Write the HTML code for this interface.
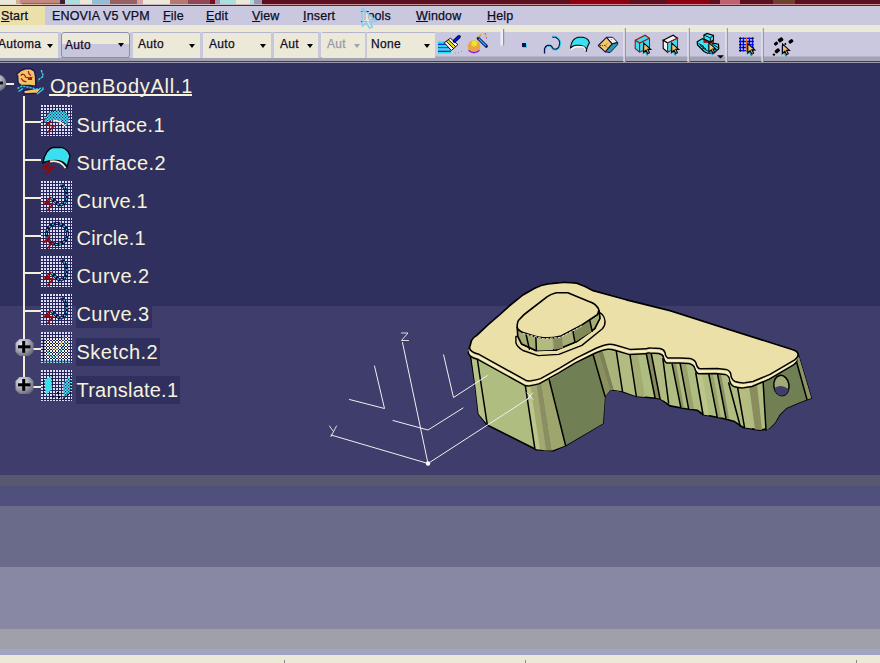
<!DOCTYPE html>
<html><head><meta charset="utf-8">
<style>
*{margin:0;padding:0;box-sizing:border-box}
html,body{width:880px;height:663px;overflow:hidden;background:#30305e}
body{position:relative;font-family:"Liberation Sans",sans-serif}
.a{position:absolute}
.band{position:absolute;left:0;width:880px}
.menu{position:absolute;top:9px;font-size:12.5px;letter-spacing:0.15px;color:#0c0c28;white-space:nowrap;-webkit-text-stroke:0.25px #0c0c28}
.u{text-decoration:underline}
.combo{position:absolute;top:32px;height:25.5px;background:#ece9d8;border-top:1px solid #b4b4cc}
.combo .t{position:absolute;left:5px;top:4px;font-size:12px;letter-spacing:0.3px;color:#0c0c28;white-space:nowrap;-webkit-text-stroke:0.25px currentColor}
.arr{position:absolute;top:11px;width:0;height:0;border-left:3.5px solid transparent;border-right:3.5px solid transparent;border-top:4px solid #000}
.sep{position:absolute;top:32px;height:25.5px;width:3px;background:#c8c8dc}
.lbl{position:absolute;left:76px;height:28px;background:#30305e;color:#f6f2dc;font-size:20px;white-space:nowrap;padding-left:0.5px;padding-right:2px;line-height:28px}
</style></head>
<body>
<!-- top strip -->
<div class="band" style="top:0;height:6px;background:#5a1020"></div>
<div class="a" style="left:0px;top:0;width:16px;height:4px;background:#ece8d8"></div><div class="a" style="left:16px;top:0;width:4px;height:4px;background:#d0b090"></div><div class="a" style="left:20px;top:0;width:40px;height:4px;background:#c08880"></div><div class="a" style="left:60px;top:0;width:5px;height:4px;background:#402030"></div><div class="a" style="left:65px;top:0;width:15px;height:4px;background:#a8e0e0"></div><div class="a" style="left:80px;top:0;width:12px;height:4px;background:#ece8d8"></div><div class="a" style="left:92px;top:0;width:18px;height:4px;background:#90c0d8"></div><div class="a" style="left:110px;top:0;width:27px;height:4px;background:#986060"></div><div class="a" style="left:137px;top:0;width:6px;height:4px;background:#d8a0a0"></div><div class="a" style="left:143px;top:0;width:27px;height:4px;background:#ece8d8"></div><div class="a" style="left:170px;top:0;width:18px;height:4px;background:#b87870"></div><div class="a" style="left:188px;top:0;width:22px;height:4px;background:#904858"></div><div class="a" style="left:210px;top:0;width:5px;height:4px;background:#701020"></div><div class="a" style="left:215px;top:0;width:5px;height:4px;background:#a098b0"></div><div class="a" style="left:220px;top:0;width:16px;height:4px;background:#a8e0e0"></div><div class="a" style="left:236px;top:0;width:14px;height:4px;background:#ece8d8"></div><div class="a" style="left:250px;top:0;width:4px;height:4px;background:#a8e0e0"></div><div class="a" style="left:254px;top:0;width:8px;height:4px;background:#9898b0"></div><div class="a" style="left:570px;top:0;width:60px;height:4px;background:#900010"></div><div class="a" style="left:667px;top:0;width:43px;height:4px;background:#900010"></div><div class="a" style="left:720px;top:0;width:20px;height:4px;background:#c06070"></div><div class="a" style="left:773px;top:0;width:22px;height:4px;background:#704030"></div><div class="a" style="left:22px;top:2.5px;width:38px;height:1.5px;background:#a05858"></div>
<div class="a" style="left:0;top:4px;width:22px;height:1px;background:#ddd8d0"></div>
<div class="a" style="left:22px;top:4px;width:38px;height:1px;background:#d8b8a0"></div>
<div class="a" style="left:60px;top:4px;width:203px;height:1px;background:#c8b8c0"></div>
<div class="a" style="left:263px;top:4px;width:617px;height:1px;background:#c89090"></div>
<div class="band" style="top:5px;height:1px;background:#40303c"></div>
<!-- menu bar -->
<div class="band" style="top:6px;height:19px;background:#c9c8df"></div>
<div class="a" style="left:0;top:6px;width:45px;height:19px;background:#ebe0a9"></div>
<div class="menu" style="left:1px"><span class="u">S</span>tart</div>
<div class="menu" style="left:52px">ENOVIA V5 VPM</div>
<div class="menu" style="left:163px"><span class="u">F</span>ile</div>
<div class="menu" style="left:206px"><span class="u">E</span>dit</div>
<div class="menu" style="left:252px"><span class="u">V</span>iew</div>
<div class="menu" style="left:303px"><span class="u">I</span>nsert</div>
<div class="menu" style="left:361px"><span class="u">T</span>ools</div>
<div class="menu" style="left:416px"><span class="u">W</span>indow</div>
<div class="menu" style="left:487px"><span class="u">H</span>elp</div>
<!-- toolbar -->
<div class="band" style="top:25px;height:32px;background:#ece9d8"></div>
<div class="a" style="left:435px;top:32px;width:445px;height:24px;background:#c9c8df"></div>
<div class="a" style="left:435px;top:56px;width:445px;height:1.5px;background:#b4b4cc"></div>
<div class="band" style="top:57px;height:4px;background:#a3a3b5"></div>
<div class="band" style="top:61px;height:1px;background:#454535"></div>
<div class="band" style="top:62px;height:1px;background:#9898a8"></div>

<div class="combo" style="left:0;width:58px"><div class="t" style="left:-2px">Automa</div><div class="arr" style="left:47px"></div></div>
<div class="sep" style="left:58px"></div>
<div class="combo" style="left:61px;width:69px;border:1px solid #8c8cac;border-radius:3px;background:linear-gradient(#ece9d8 0,#ece9d8 11px,#c8c6dc 11px)"><div class="t" style="left:3px;top:5px">Auto</div><div class="arr" style="left:56px;top:10px"></div></div>
<div class="sep" style="left:130px"></div>
<div class="combo" style="left:133px;width:67px"><div class="t">Auto</div><div class="arr" style="left:56px"></div></div>
<div class="sep" style="left:200px"></div>
<div class="combo" style="left:203px;width:68px"><div class="t" style="left:6px">Auto</div><div class="arr" style="left:57px"></div></div>
<div class="sep" style="left:271px"></div>
<div class="combo" style="left:274px;width:44px"><div class="t" style="left:6px">Aut</div><div class="arr" style="left:33px"></div></div>
<div class="sep" style="left:318px"></div>
<div class="combo" style="left:322px;width:43px"><div class="t" style="left:5px;color:#9a98a8">Aut</div><div class="arr" style="left:32px;border-top-color:#a0a0b0"></div></div>
<div class="sep" style="left:365px;width:2px"></div>
<div class="combo" style="left:367px;width:68px"><div class="t" style="left:4px">None</div><div class="arr" style="left:57px"></div></div>


<!-- toolbar icons svg -->
<svg class="a" style="left:0;top:0" width="880" height="64">
<defs>
<g id="cur" transform="scale(0.85)"><path d="M0,0 L0,12 L2.8,9.5 L4.8,13.5 L6.8,12.5 L4.8,8.5 L8.3,8.5 Z" fill="#18a0a8" transform="translate(-1.2,1.5)"/><path d="M0,0 L0,11 L2.8,8.5 L4.8,12.5 L6.8,11.5 L4.8,7.5 L8.3,7.5 Z" fill="#f8c868" stroke="#000018" stroke-width="1.3" stroke-linejoin="miter"/></g>
</defs>
<!-- brush -->
<g>
<rect x="438" y="41.5" width="13" height="2.2" fill="#20e0f0"/><rect x="438" y="43.7" width="13" height="1.2" fill="#0020e0"/>
<rect x="438" y="45" width="13" height="2.2" fill="#20e0f0"/><rect x="438" y="47.2" width="13" height="1.2" fill="#0020e0"/>
<rect x="438" y="48.5" width="13" height="2.2" fill="#20e0f0"/><rect x="438" y="50.7" width="13" height="1.2" fill="#0020e0"/>
<rect x="438" y="52" width="13" height="1.5" fill="#20e0f0"/>
<path d="M444.2,42.7 L446.3,41.2 L453.6,48.6 L451.4,50.5 Z" fill="#f8f8f0"/>
<path d="M446.3,41.2 L448.3,39.7 L455.7,46.6 L453.6,48.6 Z" fill="#f0e020"/>
<path d="M448.3,39.7 L450.4,38.2 L457.9,44.7 L455.7,46.6 Z" fill="#f8f8f0"/>
<path d="M444.2,42.7 L450.4,38.2 L457.9,44.7 L451.4,50.5 Z M446.3,41.2 L453.6,48.6 M448.3,39.7 L455.7,46.6" fill="none" stroke="#000" stroke-width="0.9"/>
<path d="M454.5,41 L459,36.8" stroke="#000" stroke-width="3.6" stroke-linecap="round"/>
<path d="M454.5,41 L459,36.8" stroke="#0018f0" stroke-width="2.2" stroke-linecap="round"/>
<g fill="#8888a0"><circle cx="455.5" cy="53" r="0.5"/><circle cx="458.5" cy="52.5" r="0.5"/><circle cx="461.5" cy="51" r="0.5"/></g>
</g>
<!-- ball + wand -->
<g>
<circle cx="474" cy="46.5" r="6.3" fill="#e8a448"/>
<path d="M467.8,47.5 A6.3,6.3 0 0 0 480.2,47.5 L479.5,50 A6.3,6.3 0 0 1 468.5,50 Z" fill="#e89a50"/>
<path d="M468.3,49.5 A6.3,6.3 0 0 0 479.7,49.5 L478.8,51 A6.3,6.3 0 0 1 469.2,51 Z" fill="#a030e0"/>
<path d="M468.5,50.3 Q474,55 479.5,50.3" stroke="#9020e0" stroke-width="1.3" fill="none"/>
<circle cx="474.3" cy="43.6" r="3" fill="#f0e41c"/>
<path d="M478.3,38.3 L486.3,46.2" stroke="#101060" stroke-width="3.2" stroke-linecap="round"/>
<path d="M478.8,38.8 L486,45.8" stroke="#30b8f0" stroke-width="1.2"/>
<g fill="#e8c020"><circle cx="478.5" cy="36.5" r="0.9"/><circle cx="481" cy="34.5" r="0.9"/><circle cx="484" cy="33.8" r="0.9"/><circle cx="486" cy="36" r="0.9"/><circle cx="483.5" cy="37.5" r="0.8"/></g>
<g fill="#b040d0"><circle cx="480" cy="36" r="0.7"/><circle cx="485.5" cy="34" r="0.7"/><circle cx="486.5" cy="38" r="0.7"/></g>
</g>
<!-- separator handle -->
<rect x="500.5" y="29" width="2.5" height="16.5" fill="#eeeef4"/>
<rect x="503" y="29" width="1.2" height="16.5" fill="#9090a0"/>
<!-- dot -->
<rect x="523" y="44" width="4" height="4" fill="#30d8f0"/>
<rect x="522" y="43" width="4" height="4" fill="#101050"/>
<!-- curve -->
<path d="M544.6,53.5 L544.6,49 Q545.5,46 547.4,45.6 L550.1,45.6 Q551.5,45.8 553.2,49 L556.3,49.3 Q558.3,48.5 559,46.8 L560,43.1 Q559.8,41 558.4,39.1 L555.6,37 L552.3,37" fill="none" stroke="#101050" stroke-width="1.5" stroke-linejoin="round"/>
<path d="M545.5,53.5 L545.5,49.5 Q546.3,46.8 547.8,46.5 L549.8,46.5 Q551,46.8 552.8,50 L556.5,50.2 Q558.9,49.4 559.8,47.2 L560.9,43.1 Q560.6,40.6 559,38.6 L556,36.2 L552.3,36.2" fill="none" stroke="#30dcf0" stroke-width="1" stroke-linejoin="round"/>
<!-- surface -->
<path d="M570.4,48 Q571,43 573.1,40.4 Q575,38 578,37.3 L583,37.3 Q587,38 588.5,40.4 L589.4,42.8 L587.2,47.1 L586.3,51.4 L585.4,47.7 Q583,45.6 579.9,45.3 L575.6,45.3 Q572.5,46 570.4,48 Z" fill="#3ae0f2" stroke="#000" stroke-width="1.1" stroke-linejoin="round"/>
<path d="M571,49.6 Q573.5,47 576.8,46.6 L583,46.9 Q585,48 585.7,50.5" fill="none" stroke="#fffff0" stroke-width="1.2"/>
<!-- block -->
<g stroke-linejoin="round">
<path d="M606.5,37.3 L612.8,37.3 L617.6,42.4 L612.1,43.7 Z" fill="#f6f4ea" stroke="#101050" stroke-width="1"/>
<path d="M612.1,43.9 L617.6,42.6 L617.6,44.6 L610,52.6 L605.2,51.8 Z" fill="#20a0a8" stroke="#101050" stroke-width="1"/>
<path d="M598.3,45.5 L606.5,37.3 L612.1,43.9 L605.2,51.8 Z" fill="#f4c664" stroke="#101050" stroke-width="1.1"/>
<path d="M600,45.5 L605,45.5 L607.5,43.5 M605,45.5 L607.5,47.5" fill="none" stroke="#302010" stroke-width="0.8" stroke-dasharray="1,1"/>
<circle cx="611.6" cy="39.6" r="0.5" fill="#606070"/>
</g>
<!-- separators -->
<rect x="623.5" y="28" width="1.3" height="34" fill="#f0f0f6"/><rect x="624.8" y="28" width="1" height="34" fill="#8c8c9c"/>
<rect x="687.5" y="28" width="1.3" height="34" fill="#f0f0f6"/><rect x="688.8" y="28" width="1" height="34" fill="#8c8c9c"/>
<rect x="725.5" y="28" width="1.3" height="34" fill="#f0f0f6"/><rect x="726.8" y="28" width="1" height="34" fill="#8c8c9c"/>
<rect x="761.5" y="28" width="1.3" height="34" fill="#f0f0f6"/><rect x="762.8" y="28" width="1" height="34" fill="#8c8c9c"/>
<!-- cube cursor 1 -->
<g>
<path d="M635.2,40.3 L645.1,35.2 L649.5,38.2 L649.5,47.1 L639.6,52.2 L635.2,48.5 Z" fill="#3ae0f2" stroke="#a01010" stroke-width="1.1"/>
<path d="M635.2,40.3 L639.6,43 L649.5,38.2 M639.6,43 L639.6,52.2" fill="none" stroke="#a01010" stroke-width="1.1"/>
<use href="#cur" x="643.7" y="43"/>
</g>
<!-- cube cursor 2 -->
<g>
<path d="M663.2,40.3 L673.1,35.2 L677.5,38.2 L667.6,43 Z" fill="#f4f4f8" stroke="#000" stroke-width="1.1"/>
<path d="M663.2,40.3 L667.6,43 L667.6,52.2 L663.2,48.5 Z" fill="#f4f4f8" stroke="#000" stroke-width="1.1"/>
<path d="M667.6,43 L677.5,38.2 L677.5,47.1 L667.6,52.2 Z" fill="#3ae0f2" stroke="#a01010" stroke-width="1.1"/>
<use href="#cur" x="671.7" y="43"/>
</g>
<!-- multi boxes -->
<g>
<path d="M697.2,41.8 L702.3,38.6 L709,42.2 L713,43.2 L718.5,44.2 L718.8,48.8 L714,52.8 L708,53.5 L704,51.5 L697.5,45 Z" fill="#3ae6f6" stroke="#000" stroke-width="1.2"/>
<path d="M698.5,43.5 L704,46.5 M700,45.5 L706,48.8 M702,47.8 L708,51 M712,44 L718,47.5 M713,47 L716,49.5" stroke="#000" stroke-width="0.9" fill="none"/>
<rect x="703.5" y="39" width="10.5" height="3.8" fill="#a00808"/>
<path d="M703.9,35 L707.1,33.4 L713.5,35.4 L713.5,40 L710.3,41.9 L704,39 Z" fill="#3ae6f6" stroke="#000" stroke-width="1.1"/>
<path d="M703.9,35 L710.3,37.9 L713.5,35.4 M710.3,37.9 L710.3,41.9" stroke="#000" stroke-width="0.9" fill="none"/>
<use href="#cur" x="708.9" y="42.7"/>
<path d="M717,55.2 L724,55.2 L720.5,58.5 Z" fill="#000"/>
</g>
<!-- grid -->
<g>
<g stroke="#0010f0" stroke-width="1.3">
<path d="M739,38.4 L754,38.4 M739,41.5 L754,41.5 M739,44.6 L754,44.6 M739,47.5 L754,47.5 M739,50.6 L754,50.6"/>
<path d="M740.3,37.5 L740.3,51.5 M743.4,37.5 L743.4,51.5 M749.4,37.5 L749.4,51.5 M752.5,37.5 L752.5,51.5"/>
</g>
<path d="M746.5,37.3 L746.5,51.8" stroke="#f06018" stroke-width="1.2"/>
<g fill="#000"><circle cx="743.4" cy="41.5" r="0.9"/><circle cx="749.4" cy="41.5" r="0.9"/><circle cx="743.4" cy="47.5" r="0.9"/><circle cx="740.3" cy="38.4" r="0.8"/><circle cx="752.5" cy="38.4" r="0.8"/><circle cx="740.3" cy="44.6" r="0.8"/><circle cx="740.3" cy="50.6" r="0.8"/></g>
<use href="#cur" x="747.8" y="43.5"/>
</g>
<!-- scatter -->
<g fill="#000">
<rect x="-2.6" y="-2" width="5.2" height="4" rx="1.2" transform="translate(780.6,39.9) rotate(-35)"/>
<rect x="-2" y="-1.5" width="4" height="3" rx="1" transform="translate(776,43.6) rotate(-35)"/>
<rect x="-2.4" y="-1.7" width="4.8" height="3.4" rx="1.1" transform="translate(790.9,41.4) rotate(-35)"/>
<rect x="-2.6" y="-1.8" width="5.2" height="3.6" rx="1.1" transform="translate(777.3,50.8) rotate(-40)"/>
<circle cx="773.9" cy="54.6" r="1.2"/>
<circle cx="785.3" cy="44" r="1"/>
</g>
<use href="#cur" x="782.5" y="44"/>
<!-- menu mouse cursor (translucent) -->
<path d="M362.5,8.5 L362.5,26 L366.3,22.5 L369.5,28 L372.3,26.8 L369.3,21.3 L376,21 Z" fill="#f2f0e6" fill-opacity="0.72" stroke="#7ccaf0" stroke-width="1.8" stroke-opacity="0.8" stroke-linejoin="round"/>
</svg>

<!-- viewport bands -->
<div class="band" style="top:63px;height:243px;background:#30305e"></div>
<div class="band" style="top:306px;height:169px;background:#3e3d6b"></div>
<div class="band" style="top:475px;height:11px;background:#58586f"></div>
<div class="band" style="top:486px;height:20px;background:#50507f"></div>
<div class="band" style="top:506px;height:61px;background:#6a6a8a"></div>
<div class="band" style="top:567px;height:62px;background:#8888a5"></div>
<div class="band" style="top:629px;height:20px;background:#a0a0ab"></div>
<div class="band" style="top:649px;height:6px;background:#a3a3c6"></div>
<!-- status bar -->
<div class="band" style="top:655px;height:8px;background:#ece9d8"></div>
<div class="a" style="left:284px;top:660px;width:1px;height:3px;background:#8a8a98"></div>
<div class="a" style="left:525px;top:660px;width:1px;height:3px;background:#8a8a98"></div>
<div class="a" style="left:856px;top:660px;width:1px;height:3px;background:#8a8a98"></div>

<!-- tree labels -->
<div class="a" style="left:50px;top:72px;height:28px;color:#f6f2dc;font-size:20px;letter-spacing:0.75px;white-space:nowrap;line-height:28px">OpenBodyAll.1</div>
<div class="a" style="left:49px;top:94px;width:143px;height:2px;background:#f6f2dc"></div>
<div class="lbl" style="top:111.0px;letter-spacing:0.3px">Surface.1</div>
<div class="lbl" style="top:148.8px;letter-spacing:0.45px">Surface.2</div>
<div class="lbl" style="top:186.6px;letter-spacing:0.2px">Curve.1</div>
<div class="lbl" style="top:224.4px;letter-spacing:0.2px">Circle.1</div>
<div class="lbl" style="top:262.2px;letter-spacing:0.43px">Curve.2</div>
<div class="lbl" style="top:300.0px;letter-spacing:0.43px">Curve.3</div>
<div class="lbl" style="top:337.8px;letter-spacing:0.48px">Sketch.2</div>
<div class="lbl" style="top:375.6px;letter-spacing:0.22px">Translate.1</div>

<!-- tree + icons svg -->
<svg class="a" style="left:0;top:0" width="880" height="663">
<defs>
<pattern id="chk" width="3" height="3" patternUnits="userSpaceOnUse"><rect width="3" height="3" fill="#26265e"/><rect x="0" y="0" width="2" height="2" fill="#dedef2"/></pattern>
<pattern id="chc" width="3" height="3" patternUnits="userSpaceOnUse"><rect width="3" height="3" fill="#3ae6f6"/><rect width="1.2" height="1.2" fill="#2a1a5a"/><rect x="1.5" y="1.5" width="1.2" height="1.2" fill="#2a1a5a"/></pattern>
<pattern id="chy" width="3" height="3" patternUnits="userSpaceOnUse"><rect width="3" height="3" fill="#1c1c58"/><rect x="0" y="0" width="2" height="2" fill="#fcf6dc"/><rect x="2" y="2" width="1" height="1" fill="#fcf6dc"/></pattern>
<radialGradient id="ball" cx="0.35" cy="0.3" r="0.8"><stop offset="0" stop-color="#ececf4"/><stop offset="0.55" stop-color="#a0a0b0"/><stop offset="1" stop-color="#606070"/></radialGradient>
</defs>
<g fill="#f2eed8">
<rect x="23" y="96" width="2" height="281"/>
<rect x="6" y="83" width="8" height="2"/>
<rect x="25" y="121" width="16" height="2"/>
<rect x="25" y="159" width="16" height="2"/>
<rect x="25" y="197" width="16" height="2"/>
<rect x="25" y="235" width="16" height="2"/>
<rect x="25" y="272" width="16" height="2"/>
<rect x="25" y="310" width="16" height="2"/>
<rect x="32" y="348" width="9" height="2"/>
<rect x="32" y="386" width="9" height="2"/>
</g>
<circle cx="-2" cy="83" r="8.2" fill="url(#ball)"/><rect x="-2" y="81.5" width="5" height="3" fill="#101020"/>
<!-- plus buttons -->
<g id="plus1"><path d="M19.5,339 h10 l4,4 v9 l-4,4 h-10 l-4,-4 v-9 z" fill="url(#ball)"/><rect x="18" y="345.3" width="12.5" height="3" fill="#000"/><rect x="22.2" y="341" width="3" height="11.8" fill="#000"/></g>
<g><path d="M19.5,377 h10 l4,4 v9 l-4,4 h-10 l-4,-4 v-9 z" fill="url(#ball)"/><rect x="18" y="383.3" width="12.5" height="3" fill="#000"/><rect x="22.2" y="379" width="3" height="11.8" fill="#000"/></g>

<!-- root icon -->
<g transform="translate(14,66)">
<path d="M2.6,8.2 L6.7,4.6 L11.3,2.8 L16.9,2.8 L20.5,5.1 L21.5,10.3 L21.8,20.2 L15.4,19.5 L7.2,19.5 L4.1,17 L3.6,9.5 Z" fill="#f2c464" stroke="#1c1660" stroke-width="1.4"/>
<path d="M9.5,24.5 L23.6,22 L27.5,22.6 L23.5,27.2 L10.3,28 Z" fill="#f2c464" stroke="#1c1660" stroke-width="1.3"/>
<path d="M3.5,22.5 L8,20 L16,21.5 L22,23 L29.7,22" fill="none" stroke="#30c8e0" stroke-width="1.5" stroke-dasharray="2.2,1"/>
<path d="M4.5,25.5 L9,22.5 M23,28 L29.5,23" fill="none" stroke="#38d8f0" stroke-width="1.2"/>
<path d="M27.2,4.1 L28.7,8.2 L29.2,10.3 L25.1,13.3 L24.1,15.2" fill="none" stroke="#38d8f0" stroke-width="1.4" stroke-dasharray="2.5,0.8"/>
<path d="M6.7,9.5 L8.2,8.2 L10.3,8.7 L11.8,11.3 L14.9,11.8 L18.5,11.3 M14.4,5.2 L14.9,7.7 L16.9,9.7 M7.2,12.3 L9.2,14.9 L12.3,15.9" fill="none" stroke="#a01818" stroke-width="1.2"/>
<rect x="14" y="12" width="4" height="2" fill="#a01818"/>
</g>
<!-- Surface.1 -->
<g transform="translate(41,105)">
<rect width="31" height="31" fill="url(#chk)"/>
<path d="M3,18 C4,8 11,5 17,5 C23,5 27,8 28,13 L26,21 C24,17 20,15 15,15 C10,15 6,16 3,18 Z" fill="url(#chc)"/>
<path d="M3,18 C4,8 11,5 17,5 C23,5 27,8 28,13" fill="none" stroke="#000" stroke-width="1" stroke-dasharray="1.5,2"/>
<path d="M13,15.5 Q20,16 24,21" stroke="#f4f0dc" stroke-width="1.6" fill="none"/>
<path d="M10,16 L5,20 L13,21 L6,28" stroke="#920808" stroke-width="1.7" fill="none"/>
</g>
<!-- Surface.2 -->
<g transform="translate(41,143)">
<path d="M2,20 C3,11 8,5 12,4.5 L21,4.5 C25,6 28,9 29,13 L26,24 C24,19.5 20,17.5 15,17.5 C10,17.5 5,18 2,20 Z" fill="#3ae0f2" stroke="#000" stroke-width="1.3"/>
<path d="M9,18.5 Q19,16.5 24.5,25" stroke="#f4f0dc" stroke-width="1.8" fill="none"/>
<path d="M9,19 L3,25 L12.5,24.5 L5,31" stroke="#920808" stroke-width="1.9" fill="none"/>
</g>
<!-- Curve.1 -->
<g transform="translate(41,181)">
<rect width="31" height="31" fill="url(#chk)"/>
<path d="M10,17 Q15,21 18,24 Q25,24 26,16 Q26,8 20,3" stroke="#0c0a3c" stroke-width="3" fill="none"/>
<path d="M10,17 Q15,21 18,24 Q25,24 26,16 Q26,8 20,3" stroke="#38dcf2" stroke-width="1.2" fill="none" stroke-dasharray="2,2"/>
<path d="M10,16 L4,22 L12,23 L6,30 M2,24 L9,20" stroke="#920808" stroke-width="1.5" fill="none"/>
</g>
<!-- Circle.1 -->
<g transform="translate(41,218)">
<rect width="31" height="31" fill="url(#chk)"/>
<circle cx="16" cy="16" r="10.5" stroke="#0c0a3c" stroke-width="3" fill="none"/>
<circle cx="16" cy="16" r="10.5" stroke="#38dcf2" stroke-width="1.2" fill="none" stroke-dasharray="2,2"/>
<path d="M10,17 L4,23 L12,24 L6,31 M2,25 L9,21" stroke="#920808" stroke-width="1.5" fill="none"/>
</g>
<!-- Curve.2 -->
<g transform="translate(41,256)">
<rect width="31" height="31" fill="url(#chk)"/>
<path d="M10,17 Q15,21 18,24 Q25,24 26,16 Q26,8 20,3" stroke="#0c0a3c" stroke-width="3" fill="none"/>
<path d="M10,17 Q15,21 18,24 Q25,24 26,16 Q26,8 20,3" stroke="#38dcf2" stroke-width="1.2" fill="none" stroke-dasharray="2,2"/>
<path d="M10,16 L4,22 L12,23 L6,30 M2,24 L9,20" stroke="#920808" stroke-width="1.5" fill="none"/>
</g>
<!-- Curve.3 -->
<g transform="translate(41,294)">
<rect width="31" height="31" fill="url(#chk)"/>
<path d="M10,17 Q15,21 18,24 Q25,24 26,16 Q26,8 20,3" stroke="#0c0a3c" stroke-width="3" fill="none"/>
<path d="M10,17 Q15,21 18,24 Q25,24 26,16 Q26,8 20,3" stroke="#38dcf2" stroke-width="1.2" fill="none" stroke-dasharray="2,2"/>
<path d="M10,16 L4,22 L12,23 L6,30 M2,24 L9,20" stroke="#920808" stroke-width="1.5" fill="none"/>
</g>
<!-- Sketch.2 -->
<g transform="translate(41,332)">
<rect width="31" height="31" fill="url(#chk)"/>
<path d="M3,7 L22,7 L27,4 L28,28 L3,28 Z" fill="url(#chy)"/>
<path d="M2.5,7 L2.5,28.5" stroke="#14104c" stroke-width="1.5"/>
<path d="M10,16 L16,17 L21,11 L23,5" stroke="#f0e080" stroke-width="1.6" fill="none" stroke-dasharray="1.6,1.2"/>
<path d="M7,19 Q8,25 13,25 Q17,24 21,17 L25,9" stroke="#18a0b0" stroke-width="1.6" fill="none" stroke-dasharray="1.8,1.2"/>
<path d="M3,29.5 L30,29.5" stroke="#18a8b8" stroke-width="2" stroke-dasharray="1.5,1.5"/>
</g>
<!-- Translate.1 -->
<g transform="translate(41,370)">
<rect width="31" height="31" fill="url(#chk)"/>
<path d="M3.5,12 L5,9 L10.4,6.2 L11.4,17.9 L9,20.9 L5,25 Z" fill="#3ae0f2"/>
<path d="M3,10 L3,25 M10.8,5 L11.5,18" stroke="#000" stroke-width="1.2" stroke-dasharray="1.5,1.5" fill="none"/>
<path d="M21.9,14.9 L26.9,7.5 L29.9,8 L29.9,22.4 L22.9,26.9 Z" fill="url(#chc)"/>
<path d="M29.9,7 L29.9,22.4 L22,28.5" stroke="#000" stroke-width="1.3" fill="none" stroke-dasharray="2,1"/>
<g fill="#000"><rect x="11.5" y="25.5" width="2" height="2"/><rect x="16" y="22" width="2" height="2"/><rect x="17" y="26" width="2" height="2"/></g>
</g>
</svg>


<!-- model svg -->
<svg class="a" style="left:0;top:0" width="880" height="663">
<g stroke-linejoin="round" stroke-linecap="round">
<!-- axis (behind) -->
<g stroke="#f0f0f0" stroke-width="1" fill="none">
<path d="M428,463.5 L331,435"/>
<path d="M428,463.5 L402.5,342.5"/>
<path d="M349.5,399.5 L384.5,408.5 L374.5,366"/>
<path d="M393,420.5 L428,430 L463,408"/>
<path d="M401.5,333 h6.5 l-6.5,7.5 h7" stroke-width="0.9"/>
<path d="M329.5,426 L333,431 M336.5,426 L331,436.5" stroke-width="0.9"/>
</g>

<!-- green silhouette -->
<path d="M469,349 L471.6,340.5 L476.6,335.6 L488.2,324.8 L499.8,314.8 L509.8,305.7 L523,295 L534.7,288.3 L548,284 L562.9,282.5 L576.6,283.3 L593.2,290.8 L626.4,299.9 L670,310.7 L720,326.7 L793,349.9 L797,352 L798.5,356 L811.2,398 L798,403 L786.4,408 L779.7,414.6 L774.8,422.9 L769.8,428 L760.3,430.2 L743.1,427.4 L734.5,421.6 L724.5,418.8 L703,414.5 L697.2,410.2 L685.8,408.7 L670,405.9 L660,398.7 L636.3,396.25 L617.5,390 L609.9,390.1 L604.8,395.2 L603,423.4 L565.6,445.5 L553.6,450.6 L536.6,449.8 L487.2,425 L478.6,414 L475.2,385 L471,358 Z" fill="#afbd80" stroke="#000" stroke-width="1.6"/>
<!-- left narrow strip -->
<path d="M471,354 L477,357 L481.2,385 L487.2,424.2 L478.6,414 L475.2,385 Z" fill="#b8c286"/>
<!-- front rounded stripes 525-550 -->
<path d="M524.9,382.9 L530,383 L540,449.5 L534.9,448.9 Z" fill="#bcc68a"/>
<path d="M530,383 L536,381.5 L546,450.5 L540,449.5 Z" fill="#a2aa72"/>
<path d="M536,381.5 L541,380 L552,450.5 L546,450.5 Z" fill="#8a8e60"/>
<path d="M541,380 L549.2,379.7 L565.6,445.5 L552,450.5 Z" fill="#9ea66e"/>
<!-- dark face -->
<path d="M549.2,379.7 L560,373.2 L576.6,363 L592.5,352.5 L605,396.25 L603,423.4 L565.6,445.5 Z" fill="#717f55"/>
<!-- stripes 592-616 -->
<path d="M592.5,352.5 L598,351.8 L610,390.5 L605,396.25 Z" fill="#8a905e"/>
<path d="M598,351.8 L603,351.5 L614,390 L610,390.5 Z" fill="#7c8256"/>
<path d="M603,351.5 L616.3,351.25 L622.5,391.25 L614,390 Z" fill="#aab47a"/>
<!-- 616-630 -->
<path d="M616.3,351.25 L630,355 L636.3,396.25 L622.5,391.25 Z" fill="#b2bc80"/>
<path d="M630,355 L638,354.5 L645,397 L636.3,396.25 Z" fill="#a4ac74"/>
<path d="M646.3,353.75 L651.3,353.75 L660,398.75 L655,397.5 Z" fill="#868a5c"/>
<path d="M651.3,353.75 L662.9,358.6 L668.6,403 L660,398.75 Z" fill="#b2bc82"/>
<!-- 663-766 -->
<path d="M672.2,364.3 L676,363.8 L684,408 L680.8,407.3 Z" fill="#8e9462"/>
<path d="M680,362.9 L686,363.5 L694,409 L688.6,408.7 Z" fill="#9aa26c"/>
<path d="M695.8,373 L702,373.3 L709,415.5 L703,414.5 Z" fill="#bcc68a"/>
<path d="M708.7,373.7 L713,373.3 L721,417.6 L717.3,417.3 Z" fill="#9aa26c"/>
<path d="M717.3,372.9 L721,373.5 L729,418.5 L725.9,418 Z" fill="#8a8e60"/>
<path d="M737.3,385.8 L745,386.3 L752,428.5 L744.5,427.4 Z" fill="#b4bc80"/>
<path d="M749,385.5 L757,384.5 L762,430 L755,429.5 Z" fill="#8a8c5c"/>
<!-- right end face -->
<path d="M763.1,381.5 L770,378.7 L796.3,361 L798.5,356 L811.2,398 L798,403 L786.4,408 L779.7,414.6 L774.8,422.9 L769.8,428 L766,430.2 Z" fill="#717f55"/>
<path d="M796.3,361 L799,357 L811.2,398 L807,399.5 Z" fill="#8a9466"/>
<ellipse cx="781.4" cy="385.5" rx="7.6" ry="10.2" transform="rotate(-8 781.4 385.5)" fill="#a2ab74" stroke="#000" stroke-width="1.5"/>
<path d="M774.5,388 Q781,383.5 788.5,389 Q787.5,395.5 781.5,395.8 Q775.5,395 774.5,388 Z" fill="#3e3d6b"/>
<!-- edge lines -->
<g stroke="#000" stroke-width="1.5" fill="none">
<path d="M477,357 L481.2,385 L487.2,424.2"/>
<path d="M524.9,382.9 L534.9,448.9"/>
<path d="M549.2,379.7 L565.6,445.5"/>
<path d="M592.5,352.5 L605,396.25"/>
<path d="M616.3,351.25 L622.5,391.25"/>
<path d="M630,355 L636.3,396.25"/>
<path d="M646.3,353.75 L655,397.5"/>
<path d="M651.3,353.75 L660,398.75"/>
<path d="M662.9,358.6 L668.6,403"/>
<path d="M672.2,364.3 L680.8,407.3"/>
<path d="M680,362.9 L688.6,408.7"/>
<path d="M695.8,373 L703,414.5"/>
<path d="M708.7,373.7 L717.3,417.3"/>
<path d="M717.3,372.9 L725.9,418"/>
<path d="M728.7,383 L740.2,426"/>
<path d="M737.3,385.8 L744.5,427.4"/>
<path d="M763.1,381.5 L766,430.2"/>
<path d="M796.3,361 L807,399.5"/>
</g>
<!-- fillet band -->
<path d="M469.5,348 L471.6,340.5 Q473.5,337 476.6,335.6 L488.2,324.8 L499.8,314.8 L509.8,305.7 L523,295 L534.7,288.3 Q541,285 548,284 L562.9,282.5 Q570,282.3 576.6,283.3 Q585,286 593.2,290.8 L626.4,299.9 L670,310.7 L720,326.7 L793,349.9 Q797,350.5 798,354 Q798.5,357 794.7,359.8 L770,374.4 L753.1,381.5 L745,382.8 Q740,383.2 735,381.5 Q731,379.5 730.8,374 Q730,370.5 725.9,369.4 L717.3,368.6 L700,368.8 Q697,368 696,363 Q694.5,359.5 690,358.6 L680,357.9 L668,358 Q665.5,357 665,352.5 Q664,349.5 660,348.6 L651,348 Q648.5,347.6 646.3,348.8 L630,349.4 L616,345.2 Q612,344 607.5,344.4 Q601,345.5 592.5,350 L576.6,357.8 L560,367.8 L540.6,378.6 Q536,380 531,380.8 Q528,381.2 525.5,380.2 L479,354.3 Q471,352.5 469.5,348 Z" transform="translate(-1.2,5)" fill="#ebe0a8" stroke="#000" stroke-width="1.5"/>
<path d="M469.5,348 L471.6,340.5 Q473.5,337 476.6,335.6 L488.2,324.8 L499.8,314.8 L509.8,305.7 L523,295 L534.7,288.3 Q541,285 548,284 L562.9,282.5 Q570,282.3 576.6,283.3 Q585,286 593.2,290.8 L626.4,299.9 L670,310.7 L720,326.7 L793,349.9 Q797,350.5 798,354 Q798.5,357 794.7,359.8 L770,374.4 L753.1,381.5 L745,382.8 Q740,383.2 735,381.5 Q731,379.5 730.8,374 Q730,370.5 725.9,369.4 L717.3,368.6 L700,368.8 Q697,368 696,363 Q694.5,359.5 690,358.6 L680,357.9 L668,358 Q665.5,357 665,352.5 Q664,349.5 660,348.6 L651,348 Q648.5,347.6 646.3,348.8 L630,349.4 L616,345.2 Q612,344 607.5,344.4 Q601,345.5 592.5,350 L576.6,357.8 L560,367.8 L540.6,378.6 Q536,380 531,380.8 Q528,381.2 525.5,380.2 L479,354.3 Q471,352.5 469.5,348 Z" transform="translate(-0.6,2.6)" fill="none" stroke="#fff8dc" stroke-width="1.1" opacity="0.8"/>
<!-- top face -->
<path d="M469.5,348 L471.6,340.5 Q473.5,337 476.6,335.6 L488.2,324.8 L499.8,314.8 L509.8,305.7 L523,295 L534.7,288.3 Q541,285 548,284 L562.9,282.5 Q570,282.3 576.6,283.3 Q585,286 593.2,290.8 L626.4,299.9 L670,310.7 L720,326.7 L793,349.9 Q797,350.5 798,354 Q798.5,357 794.7,359.8 L770,374.4 L753.1,381.5 L745,382.8 Q740,383.2 735,381.5 Q731,379.5 730.8,374 Q730,370.5 725.9,369.4 L717.3,368.6 L700,368.8 Q697,368 696,363 Q694.5,359.5 690,358.6 L680,357.9 L668,358 Q665.5,357 665,352.5 Q664,349.5 660,348.6 L651,348 Q648.5,347.6 646.3,348.8 L630,349.4 L616,345.2 Q612,344 607.5,344.4 Q601,345.5 592.5,350 L576.6,357.8 L560,367.8 L540.6,378.6 Q536,380 531,380.8 Q528,381.2 525.5,380.2 L479,354.3 Q471,352.5 469.5,348 Z" fill="#ebe0a8" stroke="#000" stroke-width="1.5"/>
<!-- boss base ring -->
<path d="M515.9,336.4 L515.9,342.8 Q517,347 523,350.5 L538.3,355.6 L558.8,354.4 L581.9,345.4 L602.4,328.7 Q605.5,325 605,321 Q604.5,317 602.4,314.6 L599,312 L599.9,318.5 L594.7,328.7 L576.8,341.5 L556.3,349.9 L535.8,350.5 L521.7,344.1 L517.8,336.4 Z" fill="#ebe0a8" stroke="#000" stroke-width="1.4"/>
<!-- boss side band -->
<path d="M517.2,327.4 L517.8,336.4 L521.7,344.1 L535.8,350.5 L556.3,349.9 L576.8,341.5 L594.7,328.7 L599.9,318.5 L599.2,310.8 L597.3,314.6 L581.9,324.9 L560.1,336.4 L543.5,337.7 L535.8,336.4 L523,332.6 Z" fill="#a6ae76" stroke="#000" stroke-width="1.6"/>
<path d="M535.8,336.4 L552,337.8 L553,350 L536.4,350.5 Z" fill="#b2ba80"/>
<path d="M553,337.6 L562,335.8 L563,348 L554,349.8 Z" fill="#8a8c5e"/>
<path d="M574,331 L589.6,319.7 L592.2,331.3 L575,342 Z" fill="#808858"/>
<g stroke="#000" stroke-width="1.5" fill="none">
<path d="M526.2,335 L529.4,349.2"/>
<path d="M535.8,336.4 L536.4,350.5"/>
<path d="M573,331.3 L574.9,342.2"/>
<path d="M589.6,319.7 L592.2,331.3"/>
</g>
<!-- boss top -->
<path d="M517.2,324.9 Q517.5,321 519.1,319.7 Q524,314 530.6,309.5 L547.3,296.7 Q551,294 556.3,292.8 L567.8,292.8 L588.3,301.2 Q594,303 596,305.6 Q599.5,309 598.6,310.8 Q598.5,313 597.3,314.6 L581.9,324.9 L560.1,336.4 Q550,338.5 543.5,337.7 Q539,337.5 535.8,336.4 L523,332.6 Q518,330 517.2,327.4 Z" fill="#ebe0a8" stroke="#000" stroke-width="1.6"/>
<path d="M523,333.5 L543.5,338.7 L560.1,337.4 L582,326" fill="none" stroke="#f8f2d8" stroke-width="0.9" stroke-dasharray="2,2"/>
</g>
<!-- axis (front) -->
<g stroke="#f0f0f0" stroke-width="1" fill="none">
<path d="M428,463.5 L530,397.5"/>
<path d="M443.5,354.5 L453.5,397.5 L487.5,375.5"/>
<path d="M527,392.5 L533,399.5 M533,392.5 L527,399.5" stroke-width="0.9"/>
</g>
<circle cx="428" cy="463.5" r="2.2" fill="#ffffff"/>
</svg>

</body></html>
